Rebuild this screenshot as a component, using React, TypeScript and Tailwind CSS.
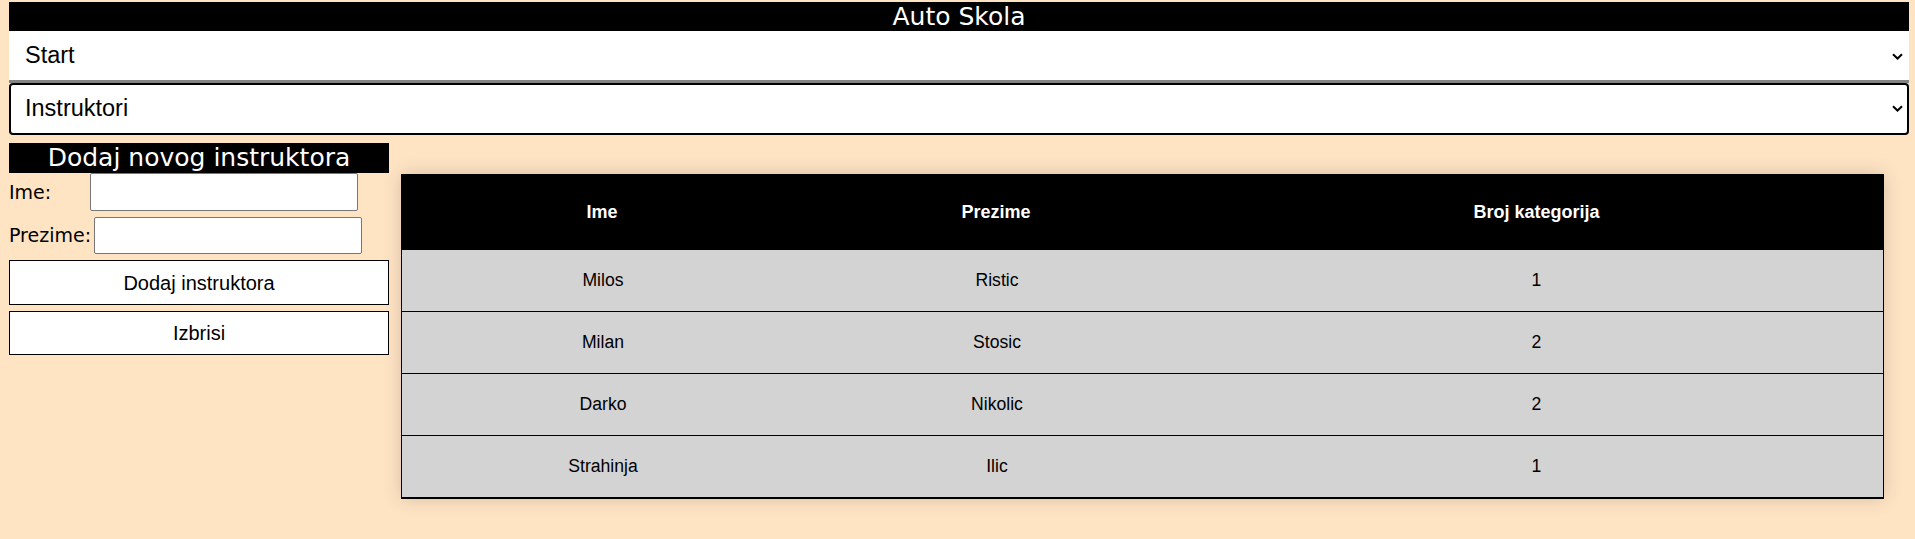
import React from 'react';

const rows = [
  ['Milos', 'Ristic', '1'],
  ['Milan', 'Stosic', '2'],
  ['Darko', 'Nikolic', '2'],
  ['Strahinja', 'Ilic', '1'],
];

const Chevron: React.FC<{ className?: string }> = ({ className }) => (
  <svg className={className} width="11" height="7" viewBox="0 0 11 7" fill="none">
    <path d="M1 1.2 L5.5 5.5 L10 1.2" stroke="#000" strokeWidth="2" />
  </svg>
);

export default function App() {
  return (
    <div className="min-h-screen bg-[#ffe4c4] pl-[9px] pr-[6px] pt-[2px] font-['Liberation_Sans',Arial,sans-serif] text-black">
      <div className="h-[29px] bg-black text-white text-center text-[25px] leading-[29px] font-['DejaVu_Sans',sans-serif]">
        Auto Skola
      </div>

      <div className="relative">
        <select className="block w-full h-[52px] appearance-none bg-white border-0 border-b-[3px] border-[#848484] pl-[16px] text-[23.5px] text-black outline-none">
          <option>Start</option>
        </select>
        <Chevron className="absolute right-[6px] top-[22px] pointer-events-none" />
      </div>

      <div className="relative">
        <select className="block w-full h-[52px] appearance-none bg-white border-2 border-black rounded-[4px] pl-[14px] text-[23.5px] text-black outline-none">
          <option>Instruktori</option>
        </select>
        <Chevron className="absolute right-[6px] top-[22px] pointer-events-none" />
      </div>

      <div className="flex mt-[8px]">
        {/* forma */}
        <div className="w-[380px] flex flex-col">
          <div className="h-[30px] bg-black text-white text-center text-[25px] leading-[30px] font-['DejaVu_Sans',sans-serif]">
            Dodaj novog instruktora
          </div>
          <div className="flex items-center h-[38px] font-['DejaVu_Sans',sans-serif] text-[19px]">
            <label className="w-[81px]">Ime:</label>
            <input className="w-[268px] h-[38px] bg-white border border-[#767676] rounded-[2px] outline-none" />
          </div>
          <div className="flex items-center h-[37px] mt-[6px] font-['DejaVu_Sans',sans-serif] text-[19px]">
            <label className="w-[85px]">Prezime:</label>
            <input className="w-[268px] h-[37px] bg-white border border-[#767676] rounded-[2px] outline-none" />
          </div>
          <button className="mt-[6px] h-[45px] w-full bg-white border border-black text-[20px]">
            Dodaj instruktora
          </button>
          <button className="mt-[6px] h-[44px] w-full bg-white border border-black text-[20px]">
            Izbrisi
          </button>
        </div>

        {/* tabela */}
        <div className="flex-1 ml-[12px] mr-[25px] mt-[31px] shadow-[0_0_18px_rgba(0,0,0,0.16)]">
          <div className="grid grid-cols-[402px_386px_1fr] h-[76px] bg-black text-white font-bold text-[18px]">
            <div className="flex items-center justify-center">Ime</div>
            <div className="flex items-center justify-center">Prezime</div>
            <div className="flex items-center justify-center">Broj kategorija</div>
          </div>
          {rows.map((r, i) => (
            <div
              key={i}
              className={`grid grid-cols-[402px_386px_1fr] bg-[#d3d3d3] border-x border-black text-[17.6px] ${
                i === rows.length - 1 ? 'h-[63px] border-b-2' : 'h-[62px] border-b'
              }`}
            >
              <div className="flex items-center justify-center">{r[0]}</div>
              <div className="flex items-center justify-center">{r[1]}</div>
              <div className="flex items-center justify-center">{r[2]}</div>
            </div>
          ))}
        </div>
      </div>
    </div>
  );
}
